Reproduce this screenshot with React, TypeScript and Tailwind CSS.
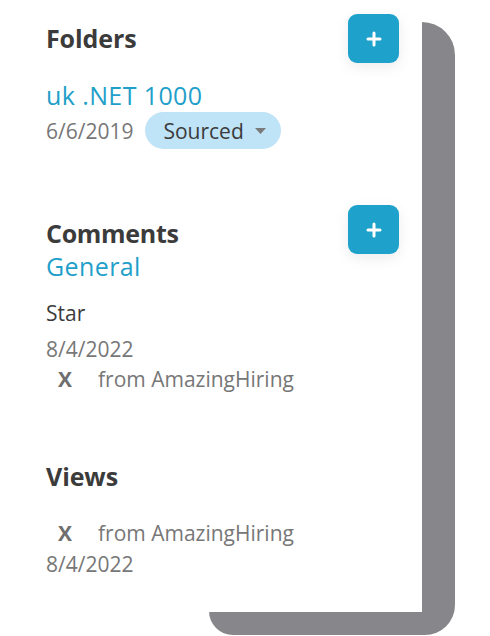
export default function App() {
  const font = { fontFamily: '"Open Sans", "Liberation Sans", sans-serif' }

  return (
    <div className="relative w-[490px] h-[636px] bg-white overflow-hidden" style={font}>
      {/* gray backdrop card */}
      <div className="absolute left-[209px] top-[22px] w-[246px] h-[613px] bg-[#87878b] rounded-tr-[33px] rounded-br-[30px] rounded-bl-[24px]" />

      <div className="relative w-[422px] h-[612px] bg-white pt-[14px] pl-[46px] pr-[23px]">
        {/* Folders */}
        <div className="flex justify-between items-start">
          <h2 className="mt-[12px] text-[25px] leading-[24px] font-bold tracking-[-0.1px] text-[#3b3b3b]">Folders</h2>
          <PlusButton />
        </div>
        <div className="mt-[20px] text-[25px] leading-[24px] tracking-[0.4px] text-[#1f9fc9]">uk .NET 1000</div>
        <div className="mt-[5px] flex items-center gap-[12px]">
          <span className="text-[21px] leading-[20px] text-[#777777]">6/6/2019</span>
          <button className="h-[37px] w-[136px] rounded-full bg-[#bfe3f7] flex items-center pl-[18px] pr-[15px]">
            <span className="text-[21px] leading-[20px] text-[#3b3b3b]">Sourced</span>
            <svg width="11" height="6" viewBox="0 0 11 6" className="ml-auto">
              <path d="M0 0h11L5.5 6z" fill="#7a7a7a" />
            </svg>
          </button>
        </div>

        {/* Comments */}
        <div className="mt-[56px] flex justify-between items-start">
          <div className="mt-[16px]">
            <h2 className="text-[25px] leading-[24px] font-bold tracking-[-0.3px] text-[#3b3b3b]">Comments</h2>
            <div className="mt-[9px] text-[25px] leading-[24px] tracking-[0.4px] text-[#1f9fc9]">General</div>
          </div>
          <PlusButton />
        </div>
        <div className="mt-[25px] text-[21px] leading-[20px] text-[#3b3b3b]">Star</div>
        <div className="mt-[16px] text-[21px] leading-[20px] text-[#777777]">8/4/2022</div>
        <SourceRow className="mt-[10px]" />

        {/* Views */}
        <h2 className="mt-[75px] text-[25px] leading-[24px] font-bold tracking-[-0.1px] text-[#3b3b3b]">Views</h2>
        <SourceRow className="mt-[35px]" />
        <div className="mt-[11px] text-[21px] leading-[20px] text-[#777777]">8/4/2022</div>
      </div>
    </div>
  )
}

function PlusButton() {
  return (
    <button className="w-[51px] h-[49px] rounded-[9px] bg-[#1ea2cb] flex items-center justify-center shadow-[0_4px_14px_rgba(0,0,0,0.08)]">
      <svg width="16" height="16" viewBox="0 0 16 16">
        <path d="M8 2v12M2 8h12" stroke="#ffffff" strokeWidth="3" strokeLinecap="round" />
      </svg>
    </button>
  )
}

function SourceRow({ className }: { className?: string }) {
  return (
    <div className={`flex items-center text-[21px] leading-[20px] ${className ?? ''}`}>
      <span className="ml-[12px] w-[40px] font-bold text-[#6f6f6f]">X</span>
      <span className="text-[#777777]">from AmazingHiring</span>
    </div>
  )
}
